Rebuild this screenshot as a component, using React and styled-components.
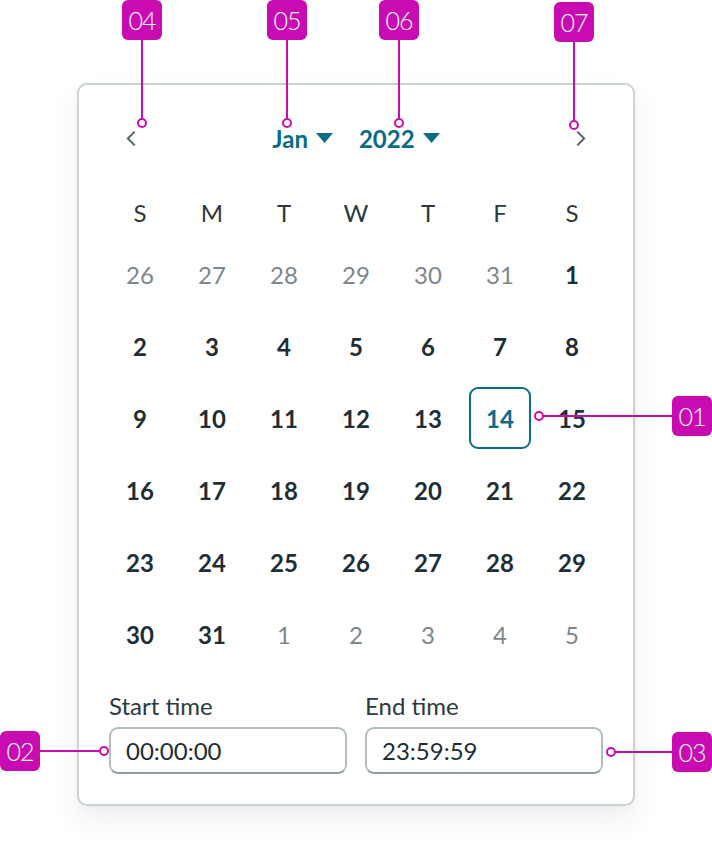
import React from 'react'
import styled, { createGlobalStyle } from 'styled-components'

const INK = '#1e2e35'
const MUTED = '#7c878d'
const TEAL = '#0b6c87'
const PINK = '#c90cb1'

const GlobalStyle = createGlobalStyle`
  html, body {
    margin: 0;
    padding: 0;
    background: #ffffff;
  }
  body {
    font-family: Lato, "Open Sans", "Liberation Sans", sans-serif;
    color: ${INK};
  }
`

const Stage = styled.div`
  position: relative;
  width: 712px;
  height: 847px;
  overflow: hidden;
  background: #ffffff;
`

const Card = styled.div`
  box-sizing: border-box;
  width: 558px;
  margin: 83px 0 0 77px;
  border: 2px solid #c8d2d7;
  border-radius: 10px;
  background: #ffffff;
  box-shadow: 0 14px 28px rgba(40, 55, 62, 0.08), 0 2px 6px rgba(40, 55, 62, 0.04);
  padding: 33px 0 30px;
`

const Header = styled.div`
  display: flex;
  align-items: center;
  justify-content: space-between;
  height: 40px;
  padding: 0 47px;
`

const ArrowButton = styled.button`
  display: flex;
  align-items: center;
  justify-content: center;
  width: 10px;
  height: 40px;
  padding: 0;
  border: none;
  background: none;
  cursor: pointer;
`

const Pickers = styled.div`
  display: flex;
  align-items: center;
  gap: 26px;
`

const Picker = styled.button`
  display: flex;
  align-items: center;
  gap: 8px;
  padding: 0;
  border: none;
  background: none;
  font-family: inherit;
  font-size: 24px;
  font-weight: 700;
  color: ${TEAL};
  cursor: pointer;
`

const Grid = styled.div`
  display: grid;
  grid-template-columns: repeat(7, 72px);
  grid-template-rows: 52px;
  grid-auto-rows: 72px;
  padding: 0 25px;
  margin-top: 28px;
`

const WeekDay = styled.div`
  display: flex;
  align-items: center;
  justify-content: center;
  font-size: 24px;
  font-weight: 400;
  color: #2b3a41;
`

const Day = styled.div`
  display: flex;
  align-items: center;
  justify-content: center;
  font-size: 24px;
  font-weight: ${(p) => (p.$outside ? 400 : 700)};
  color: ${(p) => (p.$outside ? MUTED : p.$selected ? TEAL : INK)};
`

const Selected = styled.span`
  box-sizing: border-box;
  display: flex;
  align-items: center;
  justify-content: center;
  width: 62px;
  height: 62px;
  border: 2px solid ${TEAL};
  border-radius: 9px;
`

const Times = styled.div`
  display: grid;
  grid-template-columns: 1fr 1fr;
  gap: 18px;
  padding: 0 30px;
  margin-top: 24px;
`

const Field = styled.label`
  display: flex;
  flex-direction: column;
  gap: 9px;
`

const FieldLabel = styled.span`
  font-size: 24px;
  line-height: 24px;
  color: #2b3a41;
`

const TimeInput = styled.input`
  box-sizing: border-box;
  width: 100%;
  height: 47px;
  padding: 0 15px;
  border: 2px solid #b3bec4;
  border-bottom-color: #8e9ba2;
  border-radius: 9px;
  background: #ffffff;
  font-family: inherit;
  font-size: 24px;
  color: ${INK};
  outline: none;
`

const Badge = styled.div`
  position: absolute;
  left: ${(p) => p.$x}px;
  top: ${(p) => p.$y}px;
  width: 40px;
  height: 40px;
  display: flex;
  align-items: center;
  justify-content: center;
  border-radius: 6px;
  background: ${PINK};
  color: #ffffff;
  font-size: 25px;
  font-weight: 300;
  letter-spacing: -1px;
`

const Leaders = styled.svg`
  position: absolute;
  left: 0;
  top: 0;
  pointer-events: none;
`

const Chevron = ({ dir }) => (
  <svg width="11" height="17" viewBox="0 0 11 17">
    <polyline
      points={dir === 'left' ? '9.5,1 2,8.5 9.5,16' : '1.5,1 9,8.5 1.5,16'}
      fill="none"
      stroke="#4c5a61"
      strokeWidth="2"
    />
  </svg>
)

const Caret = () => (
  <svg width="17" height="10" viewBox="0 0 17 10">
    <polygon points="0,0 17,0 8.5,10" fill={TEAL} />
  </svg>
)

const WEEKDAYS = ['S', 'M', 'T', 'W', 'T', 'F', 'S']

const days = [
  ...[26, 27, 28, 29, 30, 31].map((d) => ({ d, outside: true })),
  ...Array.from({ length: 31 }, (_, i) => ({ d: i + 1 })),
  ...[1, 2, 3, 4, 5].map((d) => ({ d, outside: true })),
]

// callout badges with their leader lines (x1,y1 -> dot)
const callouts = [
  { id: '04', x: 122, y: 0, line: [142, 40, 142, 119], dot: [142, 123] },
  { id: '05', x: 267, y: 0, line: [287, 40, 287, 119], dot: [287, 123] },
  { id: '06', x: 379, y: 0, line: [399, 40, 399, 119], dot: [399, 123] },
  { id: '07', x: 554, y: 2, line: [574, 42, 574, 121], dot: [574, 125] },
  { id: '01', x: 672, y: 396, line: [543, 416, 672, 416], dot: [539, 416] },
  { id: '02', x: 0, y: 731, line: [40, 751, 100, 751], dot: [104, 751] },
  { id: '03', x: 672, y: 732, line: [615, 752, 672, 752], dot: [611, 752] },
]

const App = () => {
  return (
    <Stage>
      <GlobalStyle />
      <Card>
        <Header>
          <ArrowButton aria-label="Previous month">
            <Chevron dir="left" />
          </ArrowButton>
          <Pickers>
            <Picker>
              Jan <Caret />
            </Picker>
            <Picker>
              2022 <Caret />
            </Picker>
          </Pickers>
          <ArrowButton aria-label="Next month">
            <Chevron dir="right" />
          </ArrowButton>
        </Header>

        <Grid>
          {WEEKDAYS.map((w, i) => (
            <WeekDay key={i}>{w}</WeekDay>
          ))}
          {days.map(({ d, outside }, i) => {
            const selected = !outside && d === 14
            return (
              <Day key={i} $outside={outside} $selected={selected}>
                {selected ? <Selected>{d}</Selected> : d}
              </Day>
            )
          })}
        </Grid>

        <Times>
          <Field>
            <FieldLabel>Start time</FieldLabel>
            <TimeInput defaultValue="00:00:00" />
          </Field>
          <Field>
            <FieldLabel>End time</FieldLabel>
            <TimeInput defaultValue="23:59:59" />
          </Field>
        </Times>
      </Card>

      <Leaders width="712" height="847">
        {callouts.map((c) => (
          <g key={c.id}>
            <line
              x1={c.line[0]}
              y1={c.line[1]}
              x2={c.line[2]}
              y2={c.line[3]}
              stroke={PINK}
              strokeWidth="2"
            />
            <circle cx={c.dot[0]} cy={c.dot[1]} r="4" fill="#ffffff" stroke={PINK} strokeWidth="2" />
          </g>
        ))}
      </Leaders>
      {callouts.map((c) => (
        <Badge key={c.id} $x={c.x} $y={c.y}>
          {c.id}
        </Badge>
      ))}
    </Stage>
  )
}

export default App
